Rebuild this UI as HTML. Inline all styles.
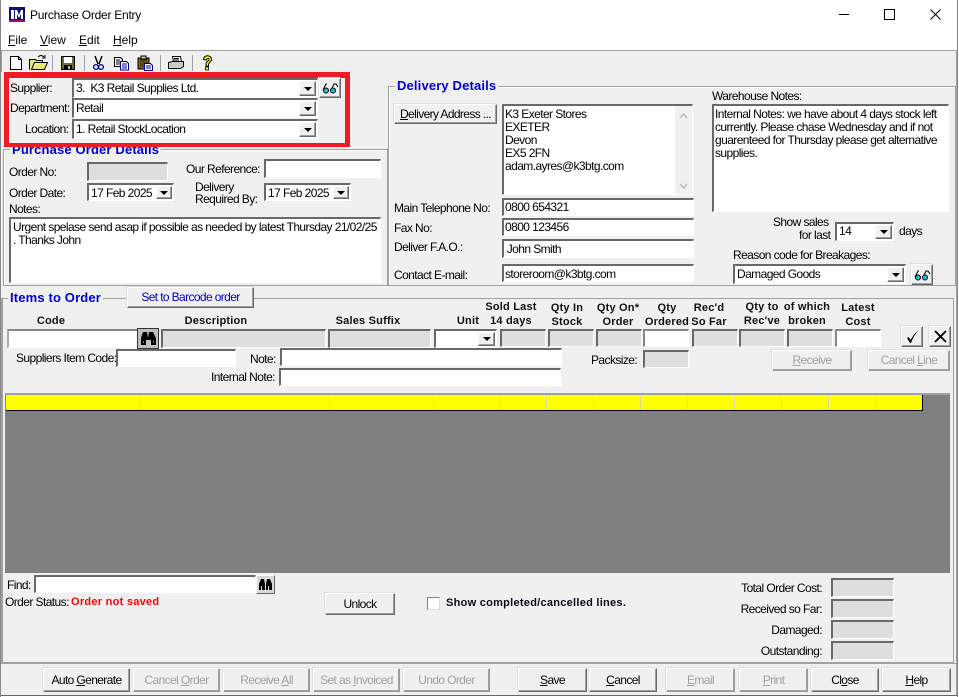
<!DOCTYPE html>
<html><head><meta charset="utf-8"><title>Purchase Order Entry</title>
<style>
html,body{margin:0;padding:0;width:959px;height:697px;overflow:hidden;background:#fff}
body{position:relative;font-family:"Liberation Sans",sans-serif;font-size:12px;color:#000}
div,span,svg{position:absolute;box-sizing:border-box}
u{text-decoration:underline}
.t{white-space:nowrap;line-height:14px;letter-spacing:-.58px}
.b{white-space:nowrap;line-height:14px;font-weight:bold;font-size:11px;letter-spacing:.27px}
.h{white-space:nowrap;line-height:14px;font-weight:bold;font-size:11px;letter-spacing:.2px;text-align:center;transform:translateX(-50%);color:#111}
.g{white-space:nowrap;line-height:16px;font-weight:bold;font-size:13px;letter-spacing:.15px;color:#0000d8;background:#f0f0f0;padding:0 2px}
.f{background:#fff;border-top:2px solid #696969;border-left:2px solid #696969;border-right:1px solid #fff;border-bottom:1px solid #fff;padding-left:2px;line-height:14px;white-space:nowrap;letter-spacing:-.58px}
.d{background:#dedede}
.btn{background:#f0f0f0;border-top:1px solid #fff;border-left:1px solid #fff;border-right:1px solid #696969;border-bottom:1px solid #696969;text-align:center;white-space:nowrap;letter-spacing:-.62px;box-shadow:-1px -1px 0 #e0e0e0,inset -1px -1px 0 #a0a0a0}
.dis{color:#a0a0a0;border-right-color:#999;border-bottom-color:#999}
.ar{right:1px;top:1px;bottom:1px;background:#f0f0f0;border-top:1px solid #fff;border-left:1px solid #fff;border-right:1px solid #696969;border-bottom:1px solid #696969;box-shadow:inset -1px -1px 0 #a0a0a0}
.ar:after{content:"";position:absolute;left:50%;top:50%;margin-left:-4px;margin-top:-2px;border-left:4px solid transparent;border-right:4px solid transparent;border-top:4px solid #000}
.col{top:395px;width:1px;height:15px;background:#d8d8a0}
</style></head><body>

<!-- window frame -->
<div style="left:0;top:0;width:1px;height:697px;background:#888"></div>
<div style="left:957px;top:0;width:1px;height:697px;background:#888"></div>

<!-- title bar -->
<svg style="left:9px;top:7px" width="16" height="15" viewBox="0 0 16 15"><rect width="16" height="15" fill="#10107a"/><rect y="13" width="16" height="2" fill="#a01060"/><rect x="2" y="3" width="3" height="9" fill="#fff"/><path d="M6 12V3h2l2 5 2-5h2v9h-2V7l-2 4-2-4v5z" fill="#fff"/></svg>
<span class="t" style="left:30px;top:8px;letter-spacing:-.25px">Purchase Order Entry</span>
<div style="left:839px;top:14px;width:10px;height:1px;background:#000"></div>
<div style="left:884px;top:9px;width:11px;height:11px;border:1px solid #000"></div>
<svg style="left:930px;top:9px" width="11" height="11" viewBox="0 0 11 11"><path d="M.5.5l10 10M10.5.5l-10 10" stroke="#000" fill="none"/></svg>

<!-- menu -->
<span class="t" style="left:8px;top:33px;letter-spacing:0"><u>F</u>ile</span>
<span class="t" style="left:40px;top:33px;letter-spacing:0"><u>V</u>iew</span>
<span class="t" style="left:79px;top:33px;letter-spacing:0"><u>E</u>dit</span>
<span class="t" style="left:113px;top:33px;letter-spacing:0"><u>H</u>elp</span>

<!-- main bg -->
<div style="left:1px;top:50px;width:956px;height:645px;background:#f0f0f0"></div>
<div style="left:1px;top:50px;width:956px;height:1px;background:#a0a0a0"></div>
<div style="left:1px;top:50px;width:1px;height:22px;background:#a0a0a0"></div>
<div style="left:956px;top:50px;width:1px;height:645px;background:#a0a0a0"></div>
<div style="left:1px;top:695px;width:957px;height:1px;background:#666"></div>

<!-- toolbar -->
<svg style="left:8px;top:54px" width="210" height="18" viewBox="0 0 210 18">
 <path d="M2.5 2.5h8l3 3v10h-11z" fill="#fff" stroke="#000"/><path d="M10.5 2.5v3h3" fill="none" stroke="#000"/>
 <path d="M21.5 15.5v-10h6l1 1h6v2h-8l-3 7h13l3-7h-8" fill="#e8e870" stroke="#000"/><path d="M30 3c2-2 4-2 6 0M37 1v3h-3" fill="none" stroke="#000"/>
 <rect x="44" y="1" width="1" height="16" fill="#a0a0a0"/>
 <rect x="53.5" y="2.5" width="13" height="13" fill="#707020" stroke="#000"/><rect x="56" y="3" width="8" height="6" fill="#fff"/><rect x="56" y="11" width="8" height="4" fill="#000"/><rect x="60" y="12" width="2" height="3" fill="#bbb"/>
 <rect x="76" y="1" width="1" height="16" fill="#a0a0a0"/>
 <path d="M87 2l3 8M94 2l-3 8" stroke="#000" stroke-width="1.4" fill="none"/><circle cx="88" cy="13" r="2.4" fill="none" stroke="#000090" stroke-width="1.3"/><circle cx="93" cy="13" r="2.4" fill="none" stroke="#000090" stroke-width="1.3"/>
 <path d="M106.5 3.5h6l2 2v7h-8z" fill="#fff" stroke="#000"/><path d="M108 6h4M108 8h4M108 10h4" stroke="#000"/>
 <path d="M112.5 7.5h6l2 2v6.500h-8z" fill="#fff" stroke="#000090"/><path d="M114 10h5M114 12h5M114 14h5" stroke="#000090"/>
 <rect x="130" y="4" width="11" height="11" fill="#806020" stroke="#000"/><rect x="133" y="2" width="5" height="3" fill="#ccc" stroke="#000"/><path d="M132 6h7M132 8h7M132 10h7M132 12h4" stroke="#303000"/>
 <path d="M136.500 9.500h6l2 2v5h-8z" fill="#fff" stroke="#000090"/><path d="M138 12h5M138 14h5" stroke="#000090"/>
 <rect x="152" y="1" width="1" height="16" fill="#a0a0a0"/>
 <path d="M164.500 2.500h8l1 5h-8z" fill="#fff" stroke="#000"/><path d="M160.500 8.500l4-1h11v5l-3 2h-12z" fill="#ccc" stroke="#000"/><path d="M161 14.500h11" stroke="#000"/><path d="M166 4.500h5M166 6h5" stroke="#000"/>
 <rect x="184" y="1" width="1" height="16" fill="#a0a0a0"/>
 <path d="M195.500 5.500c0-5 8-5 8 0 0 2-3 3-3 5v1.500h-2.500v-2c0-2.500 3-3 3-4.500 0-1.500-2.500-1.500-2.500.5z" fill="#ffff00" stroke="#000"/><rect x="197.500" y="13" width="3" height="3" fill="#ffff00" stroke="#000" stroke-width=".8"/>
</svg>

<!-- groups -->
<div style="left:3px;top:149px;width:385px;height:137px;border:1px solid #a0a0a0;box-shadow:inset 1px 1px 0 #fff"></div>
<div style="left:388px;top:86px;width:568px;height:200px;border:1px solid #a0a0a0;box-shadow:inset 1px 1px 0 #fff"></div>
<div style="left:1px;top:298px;width:953px;height:365px;border:1px solid #a0a0a0;border-left:2px solid #a0a0a0"></div>
<div style="left:1px;top:663px;width:956px;height:1px;background:#a0a0a0"></div>

<span class="g" style="left:10px;top:142px">Purchase Order Details</span>
<span class="g" style="left:395px;top:78px;">Delivery Details</span>
<span class="g" style="left:8px;top:290px">Items to Order</span>

<!-- highlighted supplier block -->
<div style="left:4px;top:72px;width:346px;height:75px;border:5px solid #ed1c24;border-top-width:6px;border-bottom-width:4px;background:#f0f0f0"></div>
<span class="t" style="left:10px;top:81px">Supplier:</span>
<span class="t" style="left:10px;top:101px">Department:</span>
<span class="t" style="left:25px;top:122px">Location:</span>
<div class="f" style="left:72px;top:78px;width:246px;height:20px;line-height:16px">3.&nbsp; K3 Retail Supplies Ltd.<div class="ar" style="width:17px"></div></div>
<div class="f" style="left:72px;top:98px;width:246px;height:20px;line-height:16px">Retail<div class="ar" style="width:17px"></div></div>
<div class="f" style="left:72px;top:119px;width:246px;height:20px;line-height:16px">1. Retail StockLocation<div class="ar" style="width:17px"></div></div>
<div class="btn" style="left:319px;top:78px;width:22px;height:20px"><svg style="left:2px;top:3px" width="17" height="12" viewBox="0 0 17 12"><path d="M1 8L4 2h1M9 8l3-6h2l2 3" fill="none" stroke="#000"/><circle cx="4" cy="8.500" r="2.500" fill="#20c0d0" stroke="#000"/><circle cx="11" cy="8.500" r="2.500" fill="#20c0d0" stroke="#000"/></svg></div>

<!-- order details -->
<span class="t" style="left:9px;top:165px">Order No:</span>
<div class="f d" style="left:87px;top:162px;width:81px;height:19px"></div>
<span class="t" style="left:186px;top:162px">Our Reference:</span>
<div class="f" style="left:264px;top:159px;width:117px;height:19px"></div>
<span class="t" style="left:9px;top:186px">Order Date:</span>
<div class="f" style="left:87px;top:183px;width:87px;height:18px;line-height:16px">17 Feb 2025<div class="ar" style="width:16px"></div></div>
<span class="t" style="left:195px;top:180px">Delivery</span>
<span class="t" style="left:195px;top:192px">Required By:</span>
<div class="f" style="left:264px;top:183px;width:87px;height:18px;line-height:16px">17 Feb 2025<div class="ar" style="width:16px"></div></div>
<span class="t" style="left:9px;top:202px">Notes:</span>
<div class="f" style="left:9px;top:217px;width:372px;height:66px;line-height:13px;padding-top:2px">Urgent spelase send asap if possible as needed by latest Thursday 21/02/25<br>. Thanks John</div>

<!-- delivery details -->
<div class="btn" style="left:394px;top:104px;width:103px;height:20px;line-height:18px"><u>D</u>elivery Address ...</div>
<div class="f" style="left:502px;top:104px;width:191px;height:91px;line-height:13px;padding-top:2px;padding-left:1px">K3 Exeter Stores<br>EXETER<br>Devon<br>EX5 2FN<br>adam.ayres@k3btg.com
 <div style="right:0;top:0;width:17px;height:88px;background:#f0f0f0"><svg style="left:4px;top:6px" width="9" height="80" viewBox="0 0 9 80"><path d="M1 6l3.500-4 3.500 4M1 72l3.500 4 3.500-4" fill="none" stroke="#bbb" stroke-width="1.500"/></svg></div></div>
<span class="t" style="left:394px;top:201px">Main Telephone No:</span>
<div class="f" style="left:502px;top:198px;width:192px;height:18px;padding-left:1px">0800 654321</div>
<span class="t" style="left:394px;top:221px">Fax No:</span>
<div class="f" style="left:502px;top:218px;width:192px;height:18px;padding-left:1px">0800 123456</div>
<span class="t" style="left:394px;top:240px">Deliver F.A.O.:</span>
<div class="f" style="left:502px;top:239px;width:192px;height:19px;line-height:16px;padding-left:0">&nbsp;John Smith</div>
<span class="t" style="left:394px;top:268px">Contact E-mail:</span>
<div class="f" style="left:502px;top:264px;width:192px;height:18px;line-height:16px;padding-left:1px">storeroom@k3btg.com</div>

<span class="t" style="left:712px;top:89px">Warehouse Notes:</span>
<div class="f" style="left:712px;top:104px;width:237px;height:108px;line-height:13px;padding-top:2px;padding-left:1px">Internal Notes: we have about 4 days stock left<br>currently. Please chase Wednesday and if not<br>guarenteed for Thursday please get alternative<br>supplies.</div>
<span class="t" style="left:773px;top:215px">Show sales</span>
<span class="t" style="left:799px;top:228px">for last</span>
<div class="f" style="left:835px;top:222px;width:59px;height:19px">14<div class="ar" style="width:17px"></div></div>
<span class="t" style="left:899px;top:224px">days</span>
<span class="t" style="left:733px;top:248px">Reason code for Breakages:</span>
<div class="f" style="left:733px;top:264px;width:173px;height:20px;line-height:16px">Damaged Goods<div class="ar" style="width:17px"></div></div>
<div class="btn" style="left:911px;top:264px;width:22px;height:21px"><svg style="left:2px;top:4px" width="17" height="12" viewBox="0 0 17 12"><path d="M1 8L4 2h1M9 8l3-6h2l2 3" fill="none" stroke="#000"/><circle cx="4" cy="8.500" r="2.500" fill="#20c0d0" stroke="#000"/><circle cx="11" cy="8.500" r="2.500" fill="#20c0d0" stroke="#000"/></svg></div>

<!-- items -->
<div class="btn" style="left:127px;top:287px;width:127px;height:21px;color:#0000c8;line-height:19px">Set to Barcode order</div>

<span class="h" style="left:51px;top:314px">Code</span>
<span class="h" style="left:216px;top:314px">Description</span>
<span class="h" style="left:368px;top:314px">Sales Suffix</span>
<span class="h" style="left:468px;top:314px">Unit</span>
<span class="h" style="left:511px;top:300px">Sold Last<br>14 days</span>
<span class="h" style="left:567px;top:301px">Qty In<br>Stock</span>
<span class="h" style="left:618px;top:301px">Qty On*<br>Order</span>
<span class="h" style="left:667px;top:301px">Qty<br>Ordered</span>
<span class="h" style="left:709px;top:301px">Rec'd<br>So Far</span>
<span class="h" style="left:762px;top:300px">Qty to<br>Rec've</span>
<span class="h" style="left:807px;top:300px">of which<br>broken</span>
<span class="h" style="left:858px;top:301px">Latest<br>Cost</span>

<div class="f" style="left:7px;top:329px;width:131px;height:19px;border-top-color:#888;border-left-color:#aaa"></div>
<div style="left:137px;top:328px;width:22px;height:21px;background:#c0c0c0;border:1px solid #333"><svg style="left:3px;top:2px" width="15" height="15" viewBox="0 0 15 15"><path d="M0 14V7l2-6h4l1 6 1-6 4 0 3 6v7h-5V9H5v5z" fill="#000"/><path d="M2 11h1M5 12h1M9 12h1M12 11h1" stroke="#fff"/></svg></div>
<div class="f d" style="left:161px;top:329px;width:165px;height:19px"></div>
<div class="f d" style="left:328px;top:329px;width:103px;height:19px"></div>
<div class="f" style="left:434px;top:329px;width:63px;height:19px"><div class="ar" style="width:17px"></div></div>
<div class="f d" style="left:500px;top:329px;width:46px;height:18px"></div>
<div class="f d" style="left:548px;top:329px;width:46px;height:18px"></div>
<div class="f d" style="left:596px;top:329px;width:46px;height:18px"></div>
<div class="f" style="left:643px;top:329px;width:46px;height:18px;border-top-color:#888;border-left-color:#888"></div>
<div class="f d" style="left:692px;top:329px;width:46px;height:18px"></div>
<div class="f d" style="left:739px;top:329px;width:46px;height:18px"></div>
<div class="f d" style="left:787px;top:329px;width:46px;height:18px"></div>
<div class="f" style="left:835px;top:329px;width:46px;height:18px;border-top-color:#888;border-left-color:#888"></div>
<div class="btn" style="left:901px;top:326px;width:22px;height:21px"><svg style="left:3px;top:2px" width="16" height="16" viewBox="0 0 16 16"><path d="M2 9l3 5 1 0C8 9 10 5 14 1 10 4 8 7 5.500 11L3.500 8z" fill="#000"/></svg></div>
<div class="btn" style="left:929px;top:326px;width:22px;height:21px"><svg style="left:3px;top:2px" width="15" height="15" viewBox="0 0 15 15"><path d="M2 2l11 11M13 2L2 13" stroke="#000" stroke-width="1.800" fill="none"/></svg></div>

<span class="t" style="left:16px;top:351px">Suppliers Item Code:</span>
<div class="f" style="left:116px;top:349px;width:120px;height:18px"></div>
<span class="t" style="left:250px;top:352px">Note:</span>
<div class="f" style="left:280px;top:348px;width:282px;height:18px"></div>
<span class="t" style="left:211px;top:370px">Internal Note:</span>
<div class="f" style="left:279px;top:368px;width:282px;height:18px"></div>
<span class="t" style="left:591px;top:353px">Packsize:</span>
<div class="f d" style="left:643px;top:350px;width:46px;height:18px"></div>
<div class="btn dis" style="left:772px;top:350px;width:80px;height:21px;line-height:19px"><u>R</u>eceive</div>
<div class="btn dis" style="left:868px;top:350px;width:82px;height:21px;line-height:19px">Cancel <u>L</u>ine</div>

<!-- grid -->
<div style="left:5px;top:393px;width:945px;height:180px;background:#808080;border-top:2px solid #a0a0a0"></div>
<div style="left:6px;top:395px;width:917px;height:16px;background:#ff0;border-bottom:1px solid #000;border-right:1px solid #000"></div>
<div class="col" style="left:139px"></div><div class="col" style="left:329px"></div><div class="col" style="left:433px"></div><div class="col" style="left:499px"></div><div class="col" style="left:546px"></div><div class="col" style="left:593px"></div><div class="col" style="left:640px"></div><div class="col" style="left:687px"></div><div class="col" style="left:734px"></div><div class="col" style="left:781px"></div><div class="col" style="left:828px"></div><div class="col" style="left:875px"></div>

<!-- find -->
<span class="t" style="left:7px;top:578px">Find:</span>
<div class="f" style="left:34px;top:575px;width:222px;height:18px"></div>
<div class="btn" style="left:256px;top:575px;width:19px;height:19px;box-shadow:none;background:#d8d8d8"><svg style="left:1px;top:1px" width="15" height="14" viewBox="0 0 15 14"><path d="M1 13V7l2-5h3l1 5v6H4V9H3v4zM8 13V7l1-5h3l2 5v6h-3V9h-1v4z" fill="#000"/></svg></div>
<span class="t" style="left:5px;top:595px">Order Status:</span>
<span class="b" style="left:71px;top:595px;color:#ff0000">Order not saved</span>
<div class="btn" style="left:325px;top:593px;width:70px;height:22px;line-height:20px">Unlock</div>
<div style="left:427px;top:597px;width:13px;height:13px;background:#fff;border:1px solid #808080;border-right-color:#ddd;border-bottom-color:#ddd"></div>
<span class="b" style="left:446px;top:596px;color:#0a0a20">Show completed/cancelled lines.</span>

<span class="t" style="right:137px;top:581px">Total Order Cost:</span>
<span class="t" style="right:137px;top:602px">Received so Far:</span>
<span class="t" style="right:137px;top:623px">Damaged:</span>
<span class="t" style="right:137px;top:644px">Outstanding:</span>
<div class="f d" style="left:831px;top:578px;width:63px;height:19px"></div>
<div class="f d" style="left:831px;top:599px;width:63px;height:19px"></div>
<div class="f d" style="left:831px;top:620px;width:63px;height:19px"></div>
<div class="f d" style="left:831px;top:641px;width:63px;height:19px"></div>

<!-- bottom buttons -->
<div class="btn" style="left:43px;top:668px;width:87px;height:24px;line-height:22px">Auto <u>G</u>enerate</div>
<div class="btn dis" style="left:133px;top:668px;width:87px;height:24px;line-height:22px">Cancel <u>O</u>rder</div>
<div class="btn dis" style="left:223px;top:668px;width:87px;height:24px;line-height:22px">Receive <u>A</u>ll</div>
<div class="btn dis" style="left:313px;top:668px;width:87px;height:24px;line-height:22px">Set as <u>I</u>nvoiced</div>
<div class="btn dis" style="left:403px;top:668px;width:87px;height:24px;line-height:22px">Undo Order</div>
<div class="btn" style="left:518px;top:668px;width:69px;height:24px;line-height:22px"><u>S</u>ave</div>
<div class="btn" style="left:589px;top:668px;width:68px;height:24px;line-height:22px"><u>C</u>ancel</div>
<div class="btn dis" style="left:666px;top:668px;width:69px;height:24px;line-height:22px"><u>E</u>mail</div>
<div class="btn dis" style="left:739px;top:668px;width:69px;height:24px;line-height:22px"><u>P</u>rint</div>
<div class="btn" style="left:811px;top:668px;width:68px;height:24px;line-height:22px">Cl<u>o</u>se</div>
<div class="btn" style="left:882px;top:668px;width:69px;height:24px;line-height:22px"><u>H</u>elp</div>
</body></html>
